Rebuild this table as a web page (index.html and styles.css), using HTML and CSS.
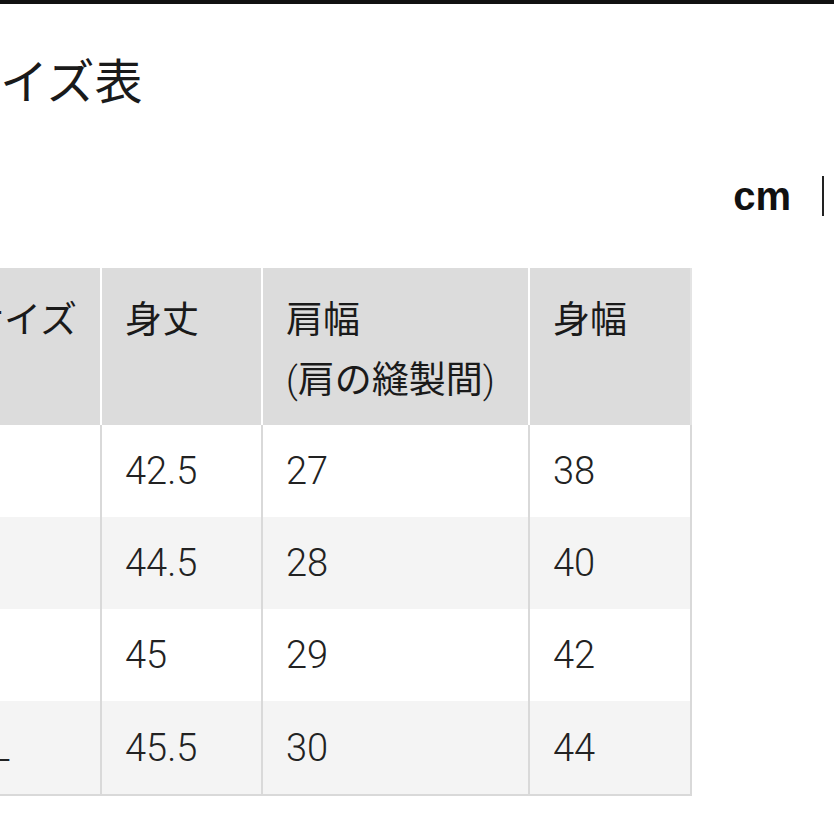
FILE: index.html
```html
<!DOCTYPE html>
<html lang="ja">
<head>
<meta charset="utf-8">
<link rel="stylesheet" href="styles.css">
</head>
<body>
<div class="topbar"></div>
<div class="page">
  <h1 class="title">サイズ表</h1>
  <div class="units">
    <span class="unit active">cm</span>
    <span class="unit other">inch</span>
  </div>
  <table class="size-table">
    <thead>
      <tr>
        <th class="c1">サイズ</th>
        <th class="c2">身丈</th>
        <th class="c3">肩幅<br><span class="paren">(</span>肩の縫製間<span class="paren">)</span></th>
        <th class="c4">身幅</th>
      </tr>
    </thead>
    <tbody>
      <tr><td>S</td><td>42.5</td><td>27</td><td>38</td></tr>
      <tr class="alt"><td>M</td><td>44.5</td><td>28</td><td>40</td></tr>
      <tr><td>L</td><td>45</td><td>29</td><td>42</td></tr>
      <tr class="alt last"><td>XL</td><td>45.5</td><td>30</td><td>44</td></tr>
    </tbody>
  </table>
</div>
</body>
</html>
```
FILE: styles.css
```css
html, body {
  margin: 0;
  padding: 0;
  background: #fff;
  overflow: hidden;
}
body {
  width: 834px;
  height: 834px;
  font-family: "Noto Sans CJK JP", "Noto Sans", sans-serif;
  color: #1a1a1a;
}
.topbar {
  height: 4px;
  background: #111;
}
.page {
  margin-left: -56px;
  width: 1000px;
}
.title {
  margin: 0;
  padding: 36px 0 0 8px;
  font-size: 48px;
  font-weight: 400;
  line-height: 76px;
  height: 76px;
}
.units {
  width: 960px;
  display: flex;
  justify-content: flex-end;
  align-items: center;
  margin-top: 58px;
  height: 44px;
}
.unit {
  font-family: "Liberation Sans", Arial, sans-serif;
  font-size: 40px;
  font-weight: 700;
  color: #111;
}
.unit.other {
  border-left: 2px solid #222;
  margin-left: 31px;
  padding-left: 20px;
  height: 40px;
  line-height: 40px;
  width: 60px;
  overflow: hidden;
  color: transparent;
}
.size-table {
  margin-top: 50px;
  border-collapse: collapse;
  table-layout: fixed;
  width: 747px;
}
.size-table th, .size-table td {
  text-align: left;
  font-weight: 400;
  padding: 0 0 0 23px;
  font-size: 37px;
}
.size-table th {
  background: #dcdcdc;
  vertical-align: top;
  height: 157px;
  padding-top: 19px;
  line-height: 60px;
  border-right: 2px solid #fff;
  box-sizing: border-box;
  color: #1a1a1a;
}
.paren {
  font-family: Roboto, "Liberation Sans", sans-serif;
  font-weight: 300;
}
.size-table th.c4 {
  border-right: 2px solid #e4e4e4;
}
.c1 { width: 157px; }
.c2 { width: 161px; }
.c3 { width: 267px; }
.c4 { width: 162px; }
.size-table td {
  height: 92px;
  vertical-align: middle;
  border-right: 2px solid #d9d9d9;
  box-sizing: border-box;
  color: #222;
  font-family: Roboto, "Noto Sans", sans-serif;
  font-weight: 300;
  font-size: 38px;
}
.size-table tbody tr.alt td {
  background: #f4f4f4;
}
.size-table tbody tr.last td {
  height: 94px;
  border-bottom: 2px solid #d9d9d9;
}
```
